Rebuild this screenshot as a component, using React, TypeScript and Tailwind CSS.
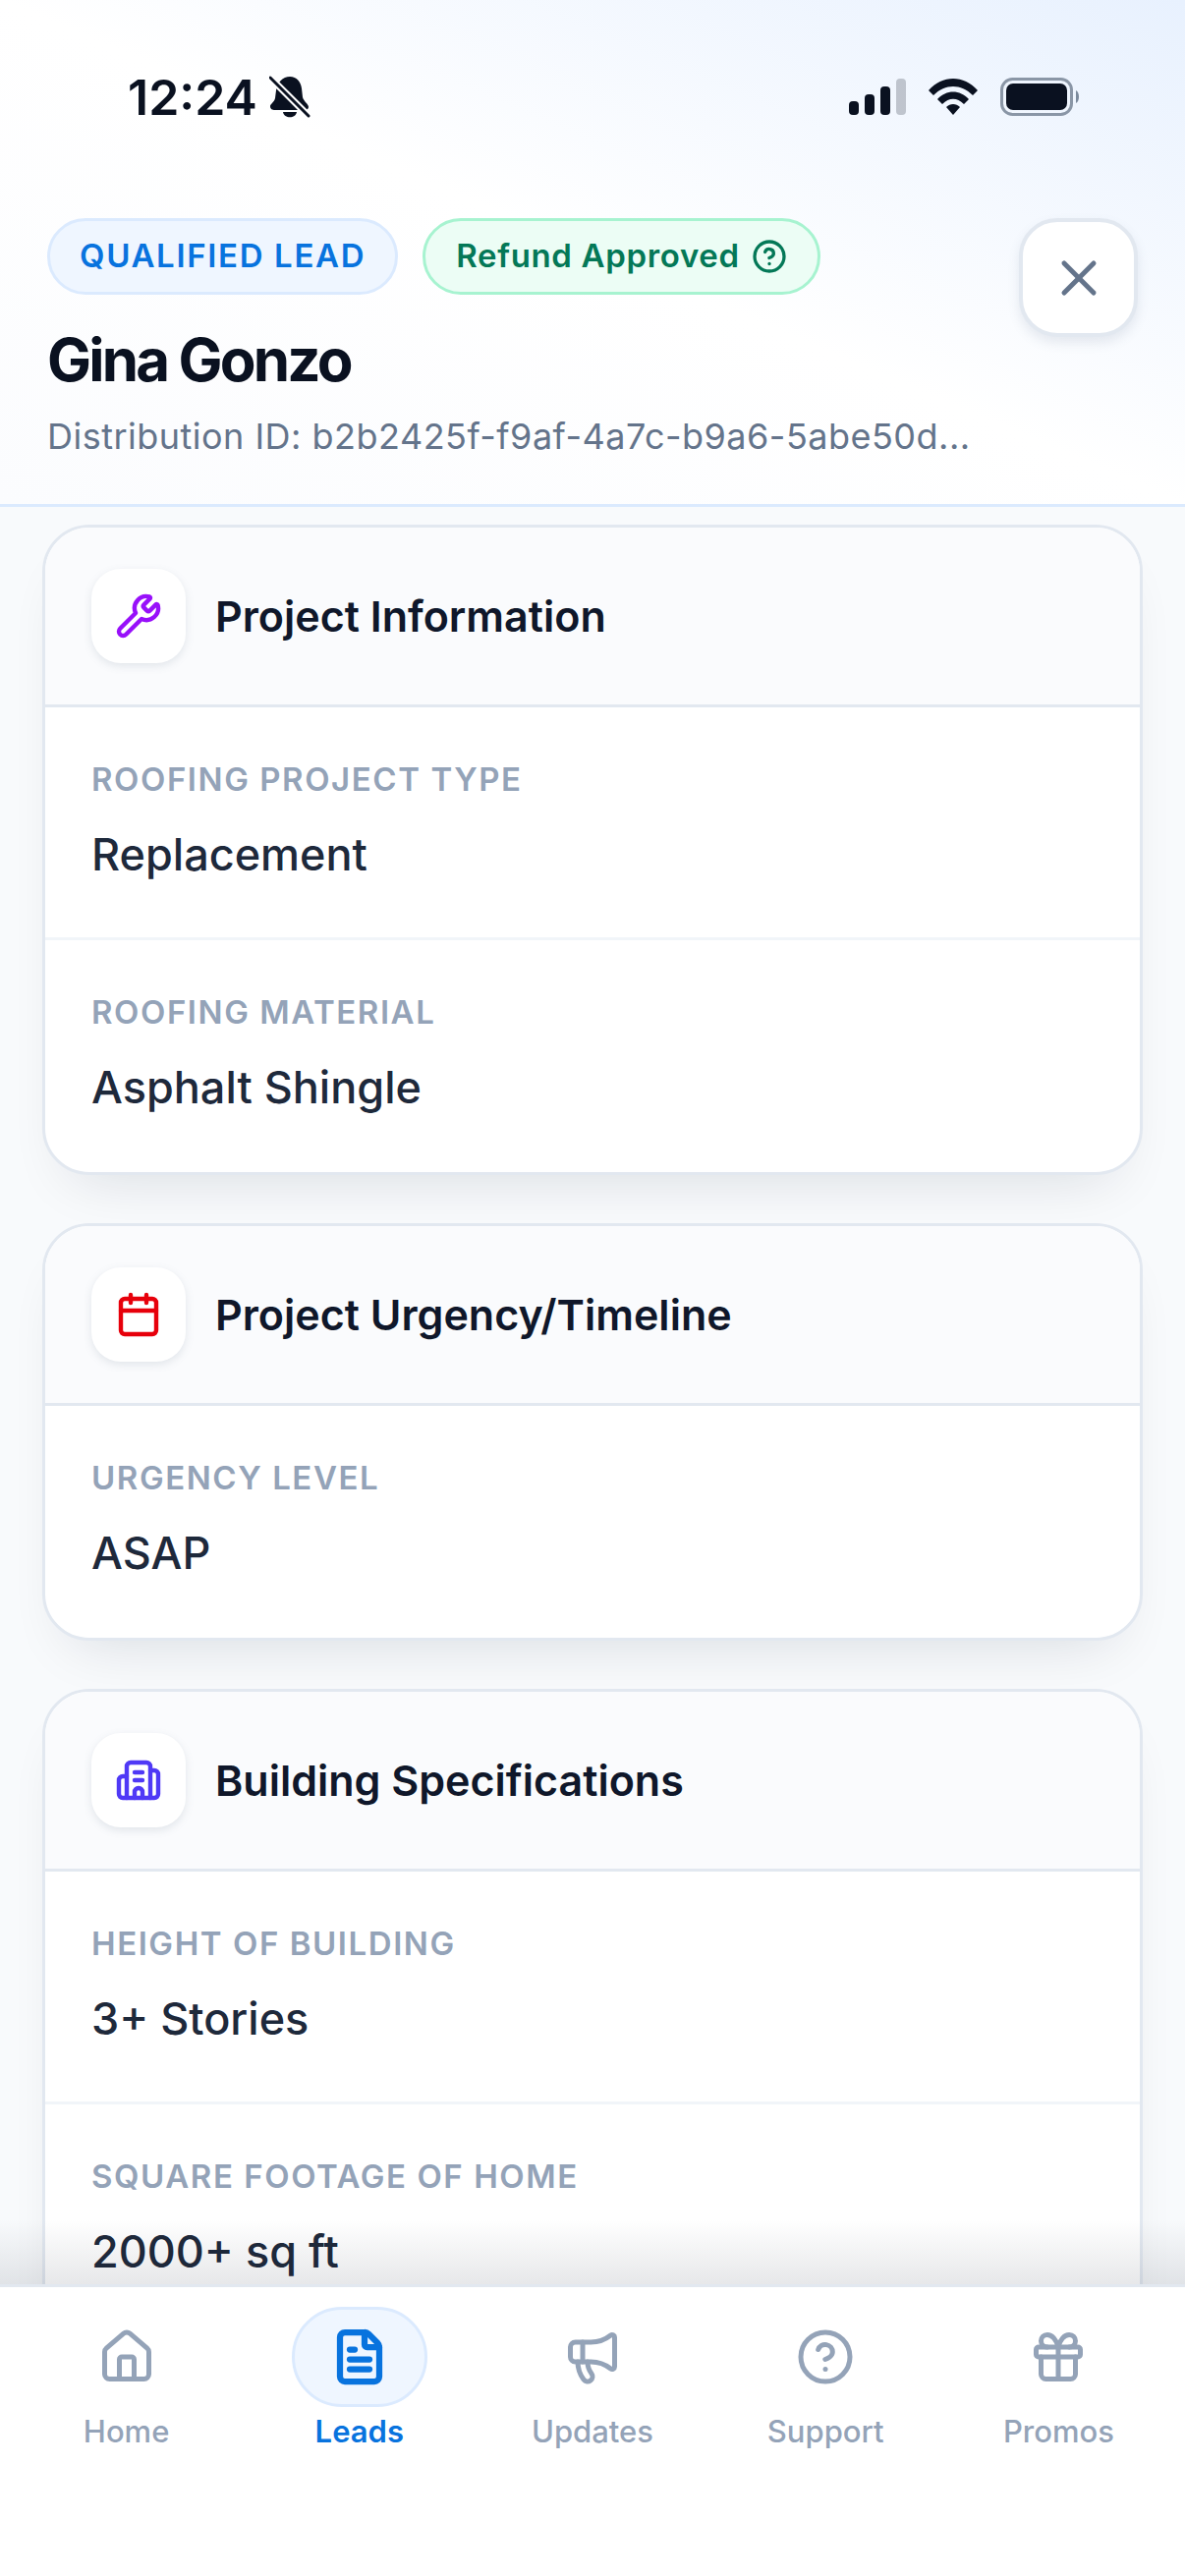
import React from 'react';
import { Building2, Calendar, CircleHelp, FileText, Gift, House, Megaphone, Wrench, X } from 'lucide-react';

const StatusIcons = () => (
  <div className="mt-[5px] flex items-center gap-[23px]">
    <svg width="58" height="38" viewBox="0 0 58 38">
      <rect x="0" y="23" width="10" height="14" rx="4" fill="#0a1120" />
      <rect x="16" y="16" width="10" height="21" rx="4" fill="#0a1120" />
      <rect x="32" y="8" width="10" height="29" rx="4" fill="#0a1120" />
      <rect x="48" y="0" width="10" height="37" rx="4" fill="#0a1120" opacity="0.22" />
    </svg>
    <svg width="50" height="38" viewBox="0 0 50 38" fill="#0a1120">
      <path d="M0 12 C14 -4 36 -4 50 12 L45 17 C33 5 17 5 5 17 Z" />
      <path d="M9 21 C18 11 32 11 41 21 L36 26 C29 19 21 19 14 26 Z" />
      <path d="M18 29 C22 25 28 25 32 29 L25 37 Z" />
    </svg>
    <svg width="82" height="40" viewBox="0 0 82 40">
      <rect x="1.5" y="1.5" width="71" height="36" rx="11" fill="none" stroke="#8a96a6" strokeWidth="3" />
      <rect x="6" y="6" width="62" height="27" rx="7" fill="#0a1120" />
      <path d="M77 13 C81 15 81 24 77 26 Z" fill="#7b8a9c" />
    </svg>
  </div>
);

const BellOff = () => (
  <svg width="42" height="44" viewBox="0 0 42 44" className="ml-[12px]">
    <path d="M21 1 C28 1 32 6 33 13 L34 22 C35 26 40 29 40 32 C40 34 38 35 36 35 L6 35 C3 35 1 34 1 31 C1 29 5 27 6 23 L7 15 C8 7 14 1 21 1 Z" fill="#0a1120" />
    <path d="M14 37 C15 44 27 44 28 37 Z" fill="#0a1120" />
    <path d="M1 2 L40 41" stroke="#fff" strokeWidth="7" />
    <path d="M1 2 L40 41" stroke="#0a1120" strokeWidth="3" strokeLinecap="round" />
  </svg>
);

const Header = () => (
  <header className="h-[516px] shrink-0 border-b-[3px] border-[#dbeafe] bg-gradient-to-bl from-[#e8f1fe] via-white via-50% to-[#fbfcfe] px-[48px]">
    <div className="flex h-[222px] items-start justify-between pt-[74px] pl-[82px] pr-[58px]">
      <div className="flex items-center">
        <span className="text-[50px] leading-[50px] font-semibold text-[#0a1120]">12:24</span>
        <BellOff />
      </div>
      <StatusIcons />
    </div>
    <div className="flex items-start justify-between">
      <div>
        <div className="flex items-center gap-[25px]">
          <span className="flex h-[78px] items-center rounded-full border-[3px] border-[#dbeafe] bg-[#eff6ff] px-[30px] text-[33px] font-semibold tracking-[0.05em] text-[#0873de]">
            QUALIFIED LEAD
          </span>
          <span className="flex h-[78px] items-center gap-[12px] rounded-full border-[3px] border-[#a7f3d0] bg-[#ecfdf5] px-[31px] text-[33px] font-semibold tracking-[0.02em] text-[#047857]">
            Refund Approved
            <CircleHelp size={36} strokeWidth={2.2} />
          </span>
        </div>
        <h1 className="mt-[30px] text-[60px] leading-[72px] font-bold tracking-[-0.047em] text-[#0a1120]">Gina Gonzo</h1>
        <p className="mt-[18px] text-[36px] leading-[48px] tracking-[0.0135em] text-[#64748b]">
          Distribution ID: b2b2425f-f9af-4a7c-b9a6-5abe50d...
        </p>
      </div>
      <button className="flex h-[121px] w-[121px] items-center justify-center rounded-[39px] border-[4px] border-[#e2e8f0] bg-white text-[#64748b] shadow-[0_6px_12px_rgba(100,116,139,0.14)]">
        <X size={60} strokeWidth={2} />
      </button>
    </div>
  </header>
);

interface Field {
  label: string;
  value: string;
}

interface CardProps {
  icon: React.ReactNode;
  title: string;
  fields: Field[];
}

const Card = ({ icon, title, fields }: CardProps) => (
  <section className="shrink-0 rounded-[48px] border-[3px] border-[#e2e8f0] bg-white shadow-[0_30px_60px_-30px_rgba(15,23,42,0.14)]">
    <div className="flex h-[183px] items-center gap-[30px] rounded-t-[45px] border-b-[3px] border-[#e2e8f0] bg-[#fafbfd] pl-[47px]">
      <div className="flex h-[96px] w-[96px] items-center justify-center rounded-[30px] bg-white shadow-[0_3px_9px_rgba(100,116,139,0.16)]">
        {icon}
      </div>
      <h2 className="text-[43px] font-semibold text-[#0f172a]">{title}</h2>
    </div>
    {fields.map((field, i) => (
      <div
        key={field.label}
        className={`pt-[52px] pl-[47px] ${i < fields.length - 1 ? 'h-[237px] border-b-[3px] border-[#f1f5f9]' : 'h-[236px]'}`}
      >
        <div className="text-[33px] leading-[42px] font-semibold tracking-[0.047em] text-[#94a3b8] uppercase">{field.label}</div>
        <div className="mt-[29px] text-[45px] leading-[54px] font-medium text-[#1e293b]">{field.value}</div>
      </div>
    ))}
  </section>
);

const tabs = [
  { label: 'Home', icon: House },
  { label: 'Leads', icon: FileText, active: true },
  { label: 'Updates', icon: Megaphone },
  { label: 'Support', icon: CircleHelp },
  { label: 'Promos', icon: Gift },
];

const TabBar = () => (
  <nav className="grid h-[297px] shrink-0 grid-cols-5 border-t-[3px] border-[#e2e8f0] bg-white px-[10px] pt-[20px]">
    {tabs.map(({ label, icon: Icon, active }) => (
      <div key={label} className="flex flex-col items-center">
        <div
          className={`flex h-[102px] w-[138px] items-center justify-center rounded-full border-[3px] ${
            active ? 'border-[#dbeafe] bg-[#eff6ff] text-[#0873de]' : 'border-transparent text-[#94a3b8]'
          }`}
        >
          <Icon size={60} strokeWidth={active ? 2.5 : 2} />
        </div>
        <span className={`mt-[6px] text-[31px] leading-[38px] ${active ? 'font-semibold text-[#0873de]' : 'font-medium text-[#94a3b8]'}`}>
          {label}
        </span>
      </div>
    ))}
  </nav>
);

export default function App() {
  return (
    <div className="flex h-[2622px] w-[1206px] flex-col overflow-hidden bg-[#f8fafc] font-['Inter',sans-serif]">
      <Header />
      <main className="relative flex flex-1 flex-col gap-[49px] overflow-hidden px-[43px] pt-[18px]">
        <Card
          icon={<Wrench size={48} strokeWidth={2.2} className="text-[#9810fa]" />}
          title="Project Information"
          fields={[
            { label: 'Roofing Project Type', value: 'Replacement' },
            { label: 'Roofing Material', value: 'Asphalt Shingle' },
          ]}
        />
        <Card
          icon={<Calendar size={48} strokeWidth={2.2} className="text-[#e7000b]" />}
          title="Project Urgency/Timeline"
          fields={[{ label: 'Urgency Level', value: 'ASAP' }]}
        />
        <Card
          icon={<Building2 size={48} strokeWidth={2.2} className="text-[#4f39f6]" />}
          title="Building Specifications"
          fields={[
            { label: 'Height of Building', value: '3+ Stories' },
            { label: 'Square Footage of Home', value: '2000+ sq ft' },
          ]}
        />
        {/* fade above the tab bar */}
        <div className="pointer-events-none absolute inset-x-0 bottom-0 h-[66px] bg-gradient-to-b from-transparent to-[#0f172a]/10" />
      </main>
      <TabBar />
    </div>
  );
}
